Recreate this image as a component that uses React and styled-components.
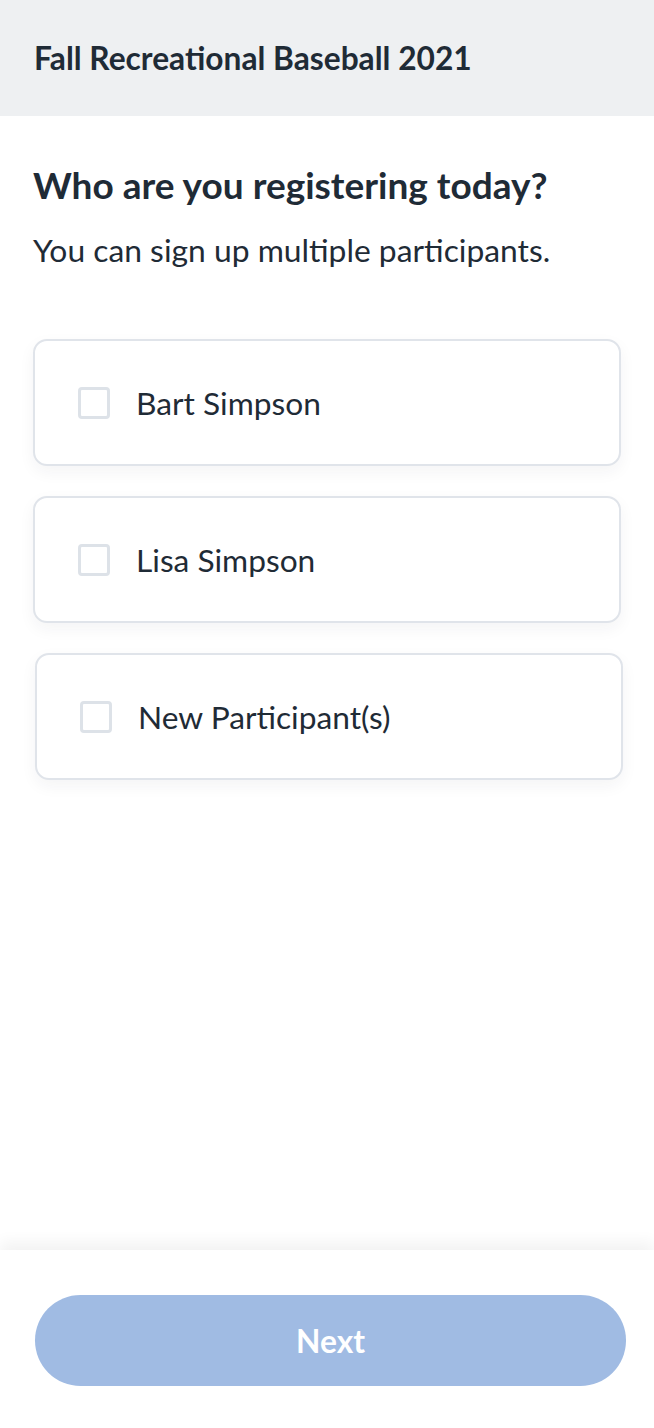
import React from "react";
import styled, { createGlobalStyle } from "styled-components";

const Global = createGlobalStyle`
  html, body { margin: 0; padding: 0; background: #ffffff; }
  body { font-family: Lato, "Open Sans", sans-serif; color: #1f2b36; }
  * { box-sizing: border-box; }
`;

const Page = styled.div`
  min-height: 100vh;
  display: flex;
  flex-direction: column;
  background: #ffffff;
`;

const TopBar = styled.header`
  height: 116px;
  background: #eef0f2;
  display: flex;
  align-items: center;
  padding: 0 34px;
`;

const TopTitle = styled.h1`
  margin: 0;
  font-size: 31.7px;
  font-weight: 700;
  color: #1f2b36;
`;

const Main = styled.main`
  flex: 1;
  padding: 47px 33px 0 33px;
`;

const Heading = styled.h2`
  margin: 0;
  font-size: 37px;
  line-height: 44px;
  font-weight: 700;
  color: #1f2b36;
`;

const Sub = styled.p`
  margin: 23px 0 0 0;
  font-size: 31.8px;
  line-height: 40px;
  font-weight: 400;
  color: #1f2b36;
`;

const List = styled.div`
  margin-top: 69px;
  display: flex;
  flex-direction: column;
  gap: 30px;
`;

const Card = styled.label`
  display: flex;
  align-items: center;
  height: 127px;
  padding: 0 43px;
  gap: 26px;
  border: 2px solid #e0e4ea;
  border-radius: 14px;
  background: #fff;
  box-shadow: 0 6px 16px rgba(30, 40, 60, 0.05);
  margin-left: ${(p) => (p.$shift ? "2px" : "0")};
  margin-right: ${(p) => (p.$shift ? "-2px" : "0")};
  cursor: pointer;
`;

const Box = styled.span`
  width: 32px;
  height: 32px;
  border: 3px solid #dde2e8;
  border-radius: 4px;
  background: #fff;
  flex-shrink: 0;
`;

const Name = styled.span`
  font-size: 31.7px;
  font-weight: 400;
  color: #1f2b36;
`;

const Footer = styled.footer`
  height: 178px;
  background: #fff;
  box-shadow: 0 -8px 14px rgba(0, 0, 0, 0.05);
  padding: 45px 28px 0 35px;
`;

const NextButton = styled.button`
  width: 100%;
  height: 91px;
  border: none;
  border-radius: 46px;
  background: #a0bbe3;
  color: #ffffff;
  font-family: Lato, sans-serif;
  font-size: 31.7px;
  font-weight: 700;
  cursor: not-allowed;
`;

const people = [
  { name: "Bart Simpson" },
  { name: "Lisa Simpson" },
  { name: "New Participant(s)", shift: true },
];

export default function App() {
  return (
    <Page>
      <Global />
      <TopBar>
        <TopTitle>Fall Recreational Baseball 2021</TopTitle>
      </TopBar>
      <Main>
        <Heading>Who are you registering today?</Heading>
        <Sub>You can sign up multiple participants.</Sub>
        <List>
          {people.map((p) => (
            <Card key={p.name} $shift={p.shift}>
              <Box />
              <Name>{p.name}</Name>
            </Card>
          ))}
        </List>
      </Main>
      <Footer>
        <NextButton disabled>Next</NextButton>
      </Footer>
    </Page>
  );
}
